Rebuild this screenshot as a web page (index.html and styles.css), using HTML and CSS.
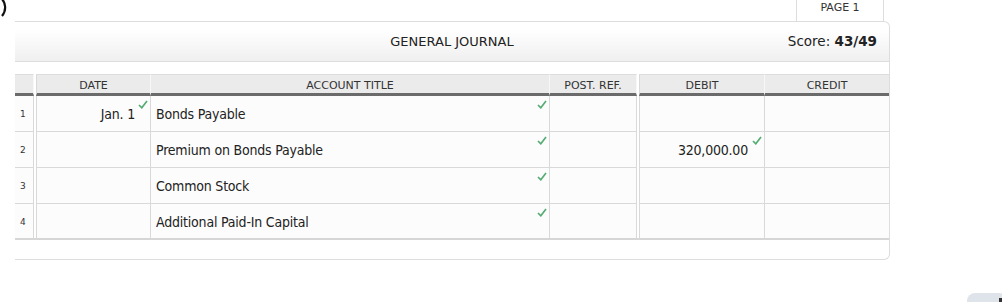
FILE: index.html
```html
<!DOCTYPE html>
<html>
<head>
    <meta charset="utf-8">
    <title>General Journal</title>
    <link rel="stylesheet" href="styles.css">
</head>
<body>
    <svg class="corner-arc" width="8" height="18" viewBox="0 0 8 18">
        <path d="M1 -2 A 13 13 0 0 1 2 16" fill="none" stroke="#111" stroke-width="2.2"/>
    </svg>

    <div class="journal">
        <div class="tabs">
            <div class="tab">PAGE 1</div>
        </div>

        <div class="panel">
            <div class="panel-head">
                <span class="title">GENERAL JOURNAL</span>
                <span class="score">Score: <b>43/49</b></span>
            </div>

            <table class="entries">
                <tr>
                    <th class="num"></th>
                    <th class="gap"></th>
                    <th class="date">DATE</th>
                    <th class="acct">ACCOUNT TITLE</th>
                    <th class="ref">POST. REF.</th>
                    <th class="gap"></th>
                    <th class="debit">DEBIT</th>
                    <th class="credit">CREDIT</th>
                </tr>
                <tr>
                    <td class="num">1</td>
                    <td class="gap"></td>
                    <td class="date">Jan. 1<span class="ok"></span></td>
                    <td class="acct">Bonds Payable<span class="ok"></span></td>
                    <td class="ref"></td>
                    <td class="gap"></td>
                    <td class="debit"></td>
                    <td class="credit"></td>
                </tr>
                <tr>
                    <td class="num">2</td>
                    <td class="gap"></td>
                    <td class="date"></td>
                    <td class="acct">Premium on Bonds Payable<span class="ok"></span></td>
                    <td class="ref"></td>
                    <td class="gap"></td>
                    <td class="debit">320,000.00<span class="ok"></span></td>
                    <td class="credit"></td>
                </tr>
                <tr>
                    <td class="num">3</td>
                    <td class="gap"></td>
                    <td class="date"></td>
                    <td class="acct">Common Stock<span class="ok"></span></td>
                    <td class="ref"></td>
                    <td class="gap"></td>
                    <td class="debit"></td>
                    <td class="credit"></td>
                </tr>
                <tr class="last">
                    <td class="num">4</td>
                    <td class="gap"></td>
                    <td class="date"></td>
                    <td class="acct">Additional Paid-In Capital<span class="ok"></span></td>
                    <td class="ref"></td>
                    <td class="gap"></td>
                    <td class="debit"></td>
                    <td class="credit"></td>
                </tr>
            </table>
        </div>
    </div>

    <div class="corner-btn"><span></span></div>
</body>
</html>
```

FILE: styles.css
```css
body {
    margin: 0;
    background: #fff;
    font-family: "DejaVu Sans", Tahoma, sans-serif;
    color: #222;
}

.corner-arc {
    position: absolute;
    left: 0;
    top: 0;
}

.journal {
    margin-left: 15px;
    width: 875px;
}

.tabs {
    display: flex;
    justify-content: flex-end;
    padding-right: 6px;
}
.tab {
    width: 88px;
    height: 21px;
    box-sizing: border-box;
    border-left: 1px solid #ddd;
    border-right: 1px solid #ddd;
    text-align: center;
    font-size: 11px;
    line-height: 16px;
    color: #333;
}

.panel {
    border-top: 1px solid #ddd;
    border-right: 1px solid #ddd;
    border-bottom: 1px solid #ddd;
    border-radius: 0 6px 6px 0;
    padding-bottom: 19px;
}

.panel-head {
    position: relative;
    height: 39px;
    border-bottom: 1px solid #ddd;
    background: linear-gradient(#fff 20%, #efefef);
    border-radius: 0 6px 0 0;
    display: flex;
    align-items: center;
    justify-content: center;
    font-size: 13px;
    margin-bottom: 12px;
}
.title {
    color: #222;
}
.score {
    position: absolute;
    right: 12px;
    top: 11px;
    font-size: 13.5px;
}

.entries {
    width: 874px;
    table-layout: fixed;
    border-collapse: separate;
    border-spacing: 0;
}
.entries th,
.entries td {
    box-sizing: border-box;
    padding: 0;
    position: relative;
}
.entries th {
    height: 22px;
    padding-top: 2px;
    background: #ebebeb;
    border-top: 1px solid #ddd;
    border-bottom: 3px solid #6b6b6b;
    border-right: 1px solid #f7f7f7;
    font-weight: normal;
    font-size: 11px;
    color: #333;
    text-align: center;
}
.entries td {
    height: 36px;
    padding-top: 1px;
    background: #fcfcfc;
    border-bottom: 1px solid #d9d9d9;
    border-right: 1px solid #d9d9d9;
    font-family: "DejaVu Sans Condensed", "DejaVu Sans", sans-serif;
    font-stretch: condensed;
    font-size: 14px;
    letter-spacing: -0.2px;
    color: #222;
}
.entries .last td {
    border-bottom: 2px solid #d6d6d6;
}

.entries .gap {
    width: 2px;
    background: #fff;
    border: none;
}
.entries .num { width: 19px; }
.entries .date { width: 115px; border-left: 1px solid #d9d9d9; }
.entries .acct { width: 399px; }
.entries .ref { width: 87px; }
.entries .debit { width: 126px; border-left: 1px solid #d9d9d9; }
.entries .credit { width: 124px; border-right: none; }
.entries th.date,
.entries th.debit { border-left-color: #d9d9d9; }

.entries td.num {
    font-family: "DejaVu Sans", sans-serif;
    font-stretch: normal;
    letter-spacing: 0;
    font-size: 9px;
    padding-left: 5px;
    color: #333;
}
.entries td.date { text-align: right; padding-right: 15px; }
.entries td.acct { padding-left: 5px; }
.entries td.debit { text-align: right; padding-right: 16px; }

.ok {
    position: absolute;
    right: 2px;
    top: 4px;
    width: 10px;
    height: 9px;
    background: url("data:image/svg+xml;utf8,<svg xmlns='http://www.w3.org/2000/svg' width='10' height='9'><path d='M1 5 L3.8 7.8 L9 1' fill='none' stroke='%2355ad74' stroke-width='1.7'/></svg>") no-repeat;
}

.corner-btn {
    position: absolute;
    left: 967px;
    top: 293px;
    width: 40px;
    height: 20px;
    border-radius: 8px;
    background: #dfe4ea;
}
.corner-btn span {
    position: absolute;
    left: 32px;
    top: 5px;
    width: 6px;
    height: 8px;
    background: #333;
}
```
